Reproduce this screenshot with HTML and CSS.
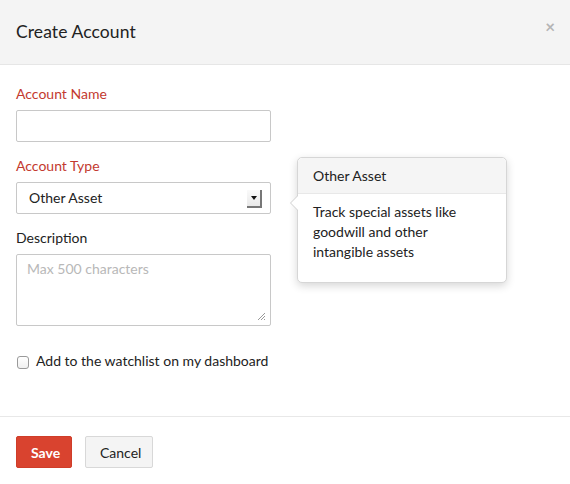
FILE: index.html
```html
<!DOCTYPE html>
<html>
<head>
<meta charset="utf-8">
<link rel="stylesheet" href="styles.css">
</head>
<body>
<div class="modal">
  <div class="modal-header">
    <h1 class="title">Create Account</h1>
    <span class="close">&times;</span>
  </div>
  <div class="modal-body">
    <div class="group">
      <label class="label required">Account Name</label>
      <input class="control" type="text">
    </div>
    <div class="group">
      <label class="label required">Account Type</label>
      <div class="select">
        <span class="select-text">Other Asset</span>
        <span class="select-btn"><span class="caret"></span></span>
      </div>
    </div>
    <div class="group">
      <label class="label">Description</label>
      <div class="textarea">
        <span class="placeholder">Max 500 characters</span>
        <svg class="grip" width="10" height="10" viewBox="0 0 10 10">
          <path d="M9 2 L2 9 M9 5 L5 9 M9 8 L8 9" stroke="#999" stroke-width="1" fill="none"/>
        </svg>
      </div>
    </div>
    <label class="check-row">
      <span class="checkbox"></span>
      <span>Add to the watchlist on my dashboard</span>
    </label>
    <div class="popover">
      <div class="popover-title">Other Asset</div>
      <div class="popover-content">Track special assets like goodwill and other intangible assets</div>
      <span class="arrow"></span>
    </div>
  </div>
  <div class="modal-footer">
    <button class="btn btn-primary">Save</button>
    <button class="btn btn-default">Cancel</button>
  </div>
</div>
</body>
</html>
```
FILE: styles.css
```css
* { box-sizing: border-box; }
html, body { margin: 0; padding: 0; background: #fff; }
body {
  font-family: Lato, "Open Sans", "Liberation Sans", sans-serif;
  font-size: 14px;
  color: #222;
  width: 570px;
  height: 484px;
  overflow: hidden;
}
.modal { width: 570px; }
.modal-header {
  height: 65px;
  background: #f4f4f4;
  border-bottom: 1px solid #e6e6e6;
  display: flex;
  align-items: center;
  justify-content: space-between;
  padding: 0 15px 2px 16px;
}
.title {
  margin: 0;
  font-size: 17.5px;
  font-weight: 400;
  color: #222;
  letter-spacing: 0.1px;
}
.close {
  color: #b5b5b5;
  font-size: 17px;
  font-weight: 700;
  line-height: 1;
  margin-top: -10px;
}
.modal-body {
  position: relative;
  padding: 20px 16px 0 16px;
  height: 351px;
}
.group { margin-bottom: 15px; width: 255px; }
.label {
  display: block;
  line-height: 18px;
  margin-bottom: 7px;
  color: #222;
}
.label.required { color: #c3392f; }
.control {
  display: block;
  width: 255px;
  height: 32px;
  border: 1px solid #c8c8c8;
  border-radius: 2px;
  background: #fff;
  margin: 0;
  padding: 0 12px;
  font: inherit;
}
.select {
  width: 255px;
  height: 32px;
  border: 1px solid #c8c8c8;
  border-radius: 2px;
  display: flex;
  align-items: center;
  justify-content: space-between;
  padding: 0 8px 2px 12px;
}
.select-text { color: #222; }
.select-btn {
  width: 15px;
  height: 18px;
  background: linear-gradient(#fafafa, #e9e9e9);
  border-right: 2px solid #777;
  border-bottom: 2px solid #777;
  display: flex;
  align-items: center;
  justify-content: center;
  margin-top: 4px;
}
.caret {
  width: 0; height: 0;
  border-left: 3px solid transparent;
  border-right: 3px solid transparent;
  border-top: 4px solid #111;
}
.textarea {
  position: relative;
  width: 255px;
  height: 72px;
  border: 1px solid #c8c8c8;
  border-radius: 2px;
  padding: 5px 10px;
}
.placeholder { color: #b8b8b8; }
.grip { position: absolute; right: 4px; bottom: 4px; }
.check-row {
  display: flex;
  align-items: center;
  gap: 7px;
  margin-top: 26px;
  padding-left: 1px;
  line-height: 18px;
}
.checkbox {
  width: 12px;
  height: 13px;
  border: 1px solid #9a9a9a;
  border-radius: 3px;
  background: linear-gradient(#fff, #f0f0f0);
  margin-top: 3px;
}
.popover {
  position: absolute;
  left: 297px;
  top: 92px;
  width: 210px;
  height: 126px;
  background: #fff;
  border: 1px solid #d6d6d6;
  border-radius: 5px;
  box-shadow: 0 3px 8px rgba(0,0,0,0.16);
}
.popover-title {
  height: 36px;
  line-height: 35px;
  padding: 0 15px;
  background: #f5f5f5;
  border-bottom: 1px solid #e8e8e8;
  border-radius: 5px 5px 0 0;
}
.popover-content {
  padding: 8px 15px;
  line-height: 20px;
}
.arrow {
  position: absolute;
  left: -8px;
  top: 37px;
  width: 0; height: 0;
  border-top: 8px solid transparent;
  border-bottom: 8px solid transparent;
  border-right: 8px solid #cfcfcf;
}
.arrow::after {
  content: "";
  position: absolute;
  left: 1px;
  top: -7px;
  border-top: 7px solid transparent;
  border-bottom: 7px solid transparent;
  border-right: 7px solid #fff;
}
.modal-footer {
  border-top: 1px solid #e8e8e8;
  padding: 19px 16px;
  display: flex;
  gap: 13px;
}
.btn {
  height: 32px;
  border-radius: 2px;
  font: inherit;
  font-size: 14px;
  padding: 0 14px;
  cursor: pointer;
}
.btn-primary {
  background: #d9432f;
  border: 1px solid #cf3d29;
  color: #fff;
  font-weight: 700;
  width: 56px;
}
.btn-default {
  background: #f4f4f4;
  border: 1px solid #d8d8d8;
  color: #222;
  width: 68px;
}
```
